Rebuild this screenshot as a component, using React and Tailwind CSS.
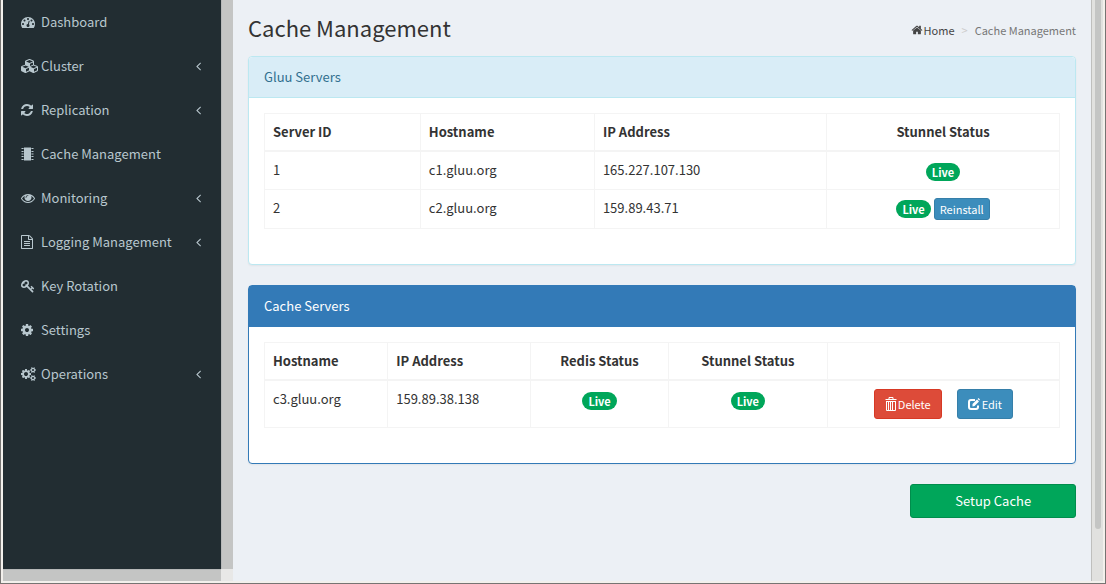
const PATHS = {
  dashboard: {
    box: "0 0 1792 1792",
    d: "M384 1152q0-53-37.5-90.5t-90.5-37.5-90.5 37.5-37.5 90.5 37.5 90.5 90.5 37.5 90.5-37.5 37.5-90.5zm192-448q0-53-37.5-90.5t-90.5-37.5-90.5 37.5-37.5 90.5 37.5 90.5 90.5 37.5 90.5-37.5 37.5-90.5zm428 481l101-382q6-26-7.5-48.5t-38.5-29.5-48 6.5-30 39.5l-101 382q-60 5-107 43.5t-63 98.5q-20 77 20 146t117 89 146-20 89-117q16-60-6-117t-72-91zm660-33q0-53-37.5-90.5t-90.5-37.5-90.5 37.5-37.5 90.5 37.5 90.5 90.5 37.5 90.5-37.5 37.5-90.5zm-640-640q0-53-37.5-90.5t-90.5-37.5-90.5 37.5-37.5 90.5 37.5 90.5 90.5 37.5 90.5-37.5 37.5-90.5zm448 192q0-53-37.5-90.5t-90.5-37.5-90.5 37.5-37.5 90.5 37.5 90.5 90.5 37.5 90.5-37.5 37.5-90.5zm320 448q0 261-141 483-19 29-54 29h-1402q-35 0-54-29-141-221-141-483 0-182 71-348t191-286 286-191 348-71 348 71 286 191 191 286 71 348z",
  },
  cubes: {
    box: "0 0 2304 1792",
    d: "M640 1632l384-192v-314l-384 164v342zm-64-454l404-173-404-173-404 173zm1088 454l384-192v-314l-384 164v342zm-64-454l404-173-404-173-404 173zm-448-293l384-165v-266l-384 164v267zm-64-379l441-189-441-189-441 189zm1088 518v416q0 36-19 67t-52 47l-448 224q-25 14-57 14t-57-14l-448-224q-5-2-7-4-2 2-7 4l-448 224q-25 14-57 14t-57-14l-448-224q-33-16-52-47t-19-67v-416q0-38 21.5-70t56.5-48l434-186v-400q0-38 21.5-70t56.5-48l448-192q23-10 50-10t50 10l448 192q35 16 56.5 48t21.5 70v400l434 186q36 16 57 48t21 70z",
  },
  refresh: {
    box: "128 0 1536 1792",
    d: "M1639 1056q0 5-1 7-64 268-268 434.5t-478 166.5q-146 0-282.5-55t-243.5-157l-129 129q-19 19-45 19t-45-19-19-45v-448q0-26 19-45t45-19h448q26 0 45 19t19 45-19 45l-137 137q71 66 161 102t187 36q134 0 250-65t186-179q11-17 53-117 8-23 30-23h192q13 0 22.5 9.5t9.5 22.5zm25-800v448q0 26-19 45t-45 19h-448q-26 0-45-19t-19-45 19-45l138-138q-148-137-349-137-134 0-250 65t-186 179q-11 17-53 117-8 23-30 23h-199q-13 0-22.5-9.5t-9.5-22.5v-7q65-268 270-434.5t480-166.5q146 0 284 55.5t245 156.5l130-129q19-19 45-19t45 19 19 45z",
  },
  chip: {
    box: "0 0 13 14",
    d: "M3 0.500h7v13H3zM1 1h1.600v1H1zM0 1.200h1v.6H0zM1 4h1.600v1H1zM0 4.200h1v.6H0zM1 6.500h1.600v1H1zM0 6.700h1v.6H0zM1 9h1.600v1H1zM0 9.200h1v.6H0zM1 12h1.600v1H1zM0 12.200h1v.6H0zM10.400 1h1.600v1h-1.600zM12 1.200h1v.6h-1zM10.400 4h1.600v1h-1.600zM12 4.200h1v.6h-1zM10.400 6.500h1.600v1h-1.600zM12 6.700h1v.6h-1zM10.400 9h1.600v1h-1.600zM12 9.200h1v.6h-1zM10.400 12h1.600v1h-1.600zM12 12.200h1v.6h-1z",
  },
  eye: {
    box: "0 0 1792 1792",
    d: "M1664 960q-152-236-381-353 61 104 61 225 0 185-131.5 316.5t-316.5 131.5-316.5-131.5-131.5-316.5q0-121 61-225-229 117-381 353 133 205 333.5 326.5t434.5 121.5 434.5-121.5 333.5-326.5zm-720-384q0-20-14-34t-34-14q-125 0-214.5 89.5t-89.5 214.5q0 20 14 34t34 14 34-14 14-34q0-86 61-147t147-61q20 0 34-14t14-34zm848 384q0 34-20 69-140 230-376.5 368.5t-499.5 138.5-499.5-139-376.5-368q-20-35-20-69t20-69q140-229 376.5-368t499.5-139 499.5 139 376.5 368q20 35 20 69z",
  },
  file: {
    box: "128 0 1536 1792",
    d: "M1596 380q28 28 48 76t20 88v1152q0 40-28 68t-68 28h-1344q-40 0-68-28t-28-68v-1600q0-40 28-68t68-28h896q40 0 88 20t76 48zm-444-244v376h376q-10-29-22-41l-313-313q-12-12-41-22zm384 1528v-1024h-416q-40 0-68-28t-28-68v-416h-768v1536h1280zm-1024-864q0-14 9-23t23-9h704q14 0 23 9t9 23v64q0 14-9 23t-23 9h-704q-14 0-23-9t-9-23v-64zm736 224q14 0 23 9t9 23v64q0 14-9 23t-23 9h-704q-14 0-23-9t-9-23v-64q0-14 9-23t23-9h704zm0 256q14 0 23 9t9 23v64q0 14-9 23t-23 9h-704q-14 0-23-9t-9-23v-64q0-14 9-23t23-9h704z",
  },
  key: {
    box: "0 0 1792 1792",
    d: "M832 512q0-80-56-136t-136-56-136 56-56 136q0 42 19 83-41-19-83-19-80 0-136 56t-56 136 56 136 136 56 136-56 56-136q0-42-19-83 41 19 83 19 80 0 136-56t56-136zm851 704q0 17-49 66t-66 49q-9 0-28.5-16t-36.5-33-38.5-40-24.5-26l-96 96 220 220q28 28 28 68 0 42-39 81t-81 39q-40 0-68-28l-671-671q-176 131-365 131-163 0-265.5-102.5t-102.5-265.5q0-160 95-313t248-248 313-95q163 0 265.5 102.5t102.5 265.5q0 189-131 365l355 355 96-96q-3-3-26-24.5t-40-38.5-33-36.5-16-28.5q0-17 49-66t66-49q13 0 23 10 6 6 46 44.5t82 79.5 86.5 86 73 78 28.5 41z",
  },
  cog: {
    box: "128 0 1536 1792",
    d: "M1152 896q0-106-75-181t-181-75-181 75-75 181 75 181 181 75 181-75 75-181zm512-109v222q0 12-8 23t-20 13l-185 28q-19 54-39 91 35 50 107 138 10 12 10 25t-9 23q-27 37-99 108t-94 71q-12 0-26-9l-138-108q-44 23-91 38-16 136-29 186-7 28-36 28h-222q-14 0-24.5-8.5t-11.5-21.5l-28-184q-49-16-90-37l-141 107q-10 9-25 9-14 0-25-11-126-114-165-168-7-10-7-23 0-12 8-23 15-21 51-66.5t54-70.5q-27-50-41-99l-183-27q-13-2-21-12.5t-8-23.5v-222q0-12 8-23t19-13l186-28q14-46 39-92-40-57-107-138-10-12-10-24 0-10 9-23 26-36 98.5-107.5t94.5-71.5q13 0 26 10l138 107q44-23 91-38 16-136 29-186 7-28 36-28h222q14 0 24.5 8.5t11.5 21.5l28 184q49 16 90 37l142-107q9-9 24-9 13 0 25 10 129 119 165 170 7 8 7 22 0 12-8 23-15 21-51 66.5t-54 70.5q26 50 41 98l183 28q13 2 21 12.5t8 23.5z",
  },
  cogs: {
    box: "-64 0 1920 1792",
    d: "M832 896q0-106-75-181t-181-75-181 75-75 181 75 181 181 75 181-75 75-181zm768 512q0-52-38-90t-90-38-90 38-38 90q0 53 37.5 90.5t90.5 37.5 90.5-37.5 37.5-90.5zm0-1024q0-52-38-90t-90-38-90 38-38 90q0 53 37.5 90.5t90.5 37.5 90.5-37.5 37.5-90.5zm-384 421v185q0 10-7 19.5t-16 10.5l-155 24q-11 35-32 76 34 48 90 115 7 11 7 20 0 12-7 19-23 30-82.5 89.5t-78.5 59.5q-11 0-21-7l-115-90q-37 19-77 31-11 108-23 155-7 24-30 24h-186q-11 0-20-7.5t-10-17.5l-23-153q-34-10-75-31l-118 89q-7 7-20 7-11 0-21-8-144-133-144-160 0-9 7-19 10-14 41-53t47-61q-23-44-35-82l-152-24q-10-1-17-9.5t-7-19.5v-185q0-10 7-19.5t16-10.5l155-24q11-35 32-76-34-48-90-115-7-11-7-20 0-12 7-20 22-30 82-89t79-59q11 0 21 7l115 90q34-18 77-32 11-108 23-154 7-24 30-24h186q11 0 20 7.5t10 17.5l23 153q34 10 75 31l118-89q8-7 20-7 11 0 21 8 144 133 144 160 0 8-7 19-12 16-42 54t-45 60q23 48 34 82l152 23q10 2 17 10.5t7 19.5zm640 533v140q0 16-149 31-12 27-30 52 51 113 51 138 0 4-4 7-122 71-124 71-8 0-46-47t-52-68q-20 2-30 2t-30-2q-14 21-52 68t-46 47q-2 0-124-71-4-3-4-7 0-25 51-138-18-25-30-52-149-15-149-31v-140q0-16 149-31 13-29 30-52-51-113-51-138 0-4 4-7 4-2 35-20t59-34 30-16q8 0 46 46.5t52 67.5q20-2 30-2t30 2q51-71 92-112l6-2q4 0 124 70 4 3 4 7 0 25-51 138 17 23 30 52 149 15 149 31zm0-1024v140q0 16-149 31-12 27-30 52 51 113 51 138 0 4-4 7-122 71-124 71-8 0-46-47t-52-68q-20 2-30 2t-30-2q-14 21-52 68t-46 47q-2 0-124-71-4-3-4-7 0-25 51-138-18-25-30-52-149-15-149-31v-140q0-16 149-31 13-29 30-52-51-113-51-138 0-4 4-7 4-2 35-20t59-34 30-16q8 0 46 46.5t52 67.5q20-2 30-2t30 2q51-71 92-112l6-2q4 0 124 70 4 3 4 7 0 25-51 138 17 23 30 52 149 15 149 31z",
  },
  home: {
    box: "64 0 1664 1792",
    d: "M1472 992v480q0 26-19 45t-45 19h-384v-384h-256v384h-384q-26 0-45-19t-19-45v-480q0-1 .5-3t.5-3l575-474 575 474q1 2 1 6zm223-69l-62 74q-8 9-21 11h-3q-13 0-21-7l-692-577-692 577q-12 8-24 7-13-2-21-11l-62-74q-8-10-7-23.5t11-21.5l719-599q32-26 76-26t76 26l244 204v-195q0-14 9-23t23-9h192q14 0 23 9t9 23v408l219 182q10 8 11 21.5t-7 23.5z",
  },
  angleLeft: {
    box: "576 0 640 1792",
    d: "M1203 544q0 13-10 23l-393 393 393 393q10 10 10 23t-10 23l-50 50q-10 10-23 10t-23-10l-466-466q-10-10-10-23t10-23l466-466q10-10 23-10t23 10l50 50q10 10 10 23z",
  },
};

function Icon({ name, className }) {
  return (
    <svg viewBox={PATHS[name].box} fill="currentColor" aria-hidden="true" className={className}>
      <path d={PATHS[name].d} />
    </svg>
  );
}

function TrashIcon() {
  return (
    <svg viewBox="0 0 12 14" fill="none" stroke="currentColor" aria-hidden="true" className="h-[14px] w-3">
      <path d="M4 2.5v-2h4v2M0.5 2.5h11M1.5 4v9.500h9V4M3.5 4.5v9M5.5 4.5v9M7.5 4.5v9M1 4.500h10" />
    </svg>
  );
}

function EditIcon() {
  return (
    <svg viewBox="0 0 12 12" fill="none" stroke="currentColor" aria-hidden="true" className="h-3 w-3">
      <path strokeWidth="2" d="M7 2H3Q1 2 1 4v5q0 2 2 2h5q2 0 2-2V7.500" />
      <path fill="currentColor" stroke="none" d="M4.500 8.500V6L9 1.500l2 2L6.500 8zM9.600 0.900l.9-.9L12 1.600l-.7.900z" />
    </svg>
  );
}

const MENU = [
  { label: "Dashboard", icon: "dashboard", size: "w-[14px]" },
  { label: "Cluster", icon: "cubes", size: "w-[18px]", open: true },
  { label: "Replication", icon: "refresh", size: "w-3", open: true },
  { label: "Cache Management", icon: "chip", size: "w-[13px]" },
  { label: "Monitoring", icon: "eye", size: "w-[14px]", open: true },
  { label: "Logging Management", icon: "file", size: "w-3", open: true },
  { label: "Key Rotation", icon: "key", size: "w-[14px]" },
  { label: "Settings", icon: "cog", size: "w-3" },
  { label: "Operations", icon: "cogs", size: "w-[15px]", open: true },
];

function Sidebar() {
  return (
    <aside className="grid w-[230px] shrink-0 grid-cols-[1fr_12px] grid-rows-[1fr_12px]">
      <nav className="bg-[#222d32] text-[#b8c7ce]">
        <ul>
          {MENU.map((item) => (
            <li key={item.label}>
              <a href="#" className="flex h-11 items-center pr-5 pl-[18px]">
                <span className="w-5 shrink-0">
                  <Icon name={item.icon} className={`h-[14px] max-w-none ${item.size}`} />
                </span>
                <span className="grow whitespace-nowrap">{item.label}</span>
                {item.open && <Icon name="angleLeft" className="h-[14px] w-[5px]" />}
              </a>
            </li>
          ))}
        </ul>
      </nav>
      <div className="border-l border-[#b6b8b8] bg-[#c4c5c4]" />
      <div className="border-t border-[#b6b8b8] bg-[#c4c5c4]" />
      <div className="bg-[#e8e8e7]" />
    </aside>
  );
}

function Live() {
  return (
    <span className="inline-block rounded-full bg-[#00a65a] px-[6px] text-[11px] leading-[18px] font-bold text-white">
      Live
    </span>
  );
}

const TH = "h-[37px] border border-b-2 border-[#f4f4f4] px-2 text-left font-bold";
const THC = "h-[37px] border border-b-2 border-[#f4f4f4] px-2 text-center font-bold";
const TD = "border border-[#f4f4f4] p-2 align-top";
const TDC = "border border-[#f4f4f4] p-2 text-center align-top";

function GluuServers() {
  return (
    <section className="rounded border border-[#bce8f1] bg-white shadow-xs">
      <h2 className="rounded-t border-b border-[#bce8f1] bg-[#d9edf7] px-[15px] py-[10px] text-[#31708f]">
        Gluu Servers
      </h2>
      <div className="px-[15px] pt-[15px] pb-[35px]">
        <table className="w-full table-fixed border-collapse">
          <colgroup>
            <col className="w-[19.6%]" />
            <col className="w-[21.9%]" />
            <col className="w-[29.2%]" />
            <col />
          </colgroup>
          <thead>
            <tr>
              <th className={TH}>Server ID</th>
              <th className={TH}>Hostname</th>
              <th className={TH}>IP Address</th>
              <th className={THC}>Stunnel Status</th>
            </tr>
          </thead>
          <tbody>
            <tr className="h-[39px]">
              <td className={TD}>1</td>
              <td className={TD}>c1.gluu.org</td>
              <td className={TD}>165.227.107.130</td>
              <td className={TDC}>
                <div className="flex h-5 items-center justify-center pt-1">
                  <Live />
                </div>
              </td>
            </tr>
            <tr className="h-[39px]">
              <td className={TD}>2</td>
              <td className={TD}>c2.gluu.org</td>
              <td className={TD}>159.89.43.71</td>
              <td className={TDC}>
                <div className="flex h-[22px] items-center justify-center gap-[3px]">
                  <Live />
                  <button className="h-[22px] rounded-[3px] border border-[#367fa9] bg-[#3c8dbc] px-[5px] text-[11px] leading-5 text-white">
                    Reinstall
                  </button>
                </div>
              </td>
            </tr>
          </tbody>
        </table>
      </div>
    </section>
  );
}

function CacheServers() {
  return (
    <section className="rounded border border-[#337ab7] bg-white shadow-xs">
      <h2 className="border-b border-[#337ab7] bg-[#337ab7] px-[15px] py-[10px] text-white">Cache Servers</h2>
      <div className="px-[15px] pt-[15px] pb-[35px]">
        <table className="w-full table-fixed border-collapse">
          <colgroup>
            <col className="w-[15.5%]" />
            <col className="w-[18%]" />
            <col className="w-[17.3%]" />
            <col className="w-[20%]" />
            <col />
          </colgroup>
          <thead>
            <tr>
              <th className={TH}>Hostname</th>
              <th className={TH}>IP Address</th>
              <th className={THC}>Redis Status</th>
              <th className={THC}>Stunnel Status</th>
              <td className={TH} />
            </tr>
          </thead>
          <tbody>
            <tr>
              <td className={TD}>c3.gluu.org</td>
              <td className={TD}>159.89.38.138</td>
              <td className={TDC}>
                <div className="flex h-5 items-center justify-center pt-1">
                  <Live />
                </div>
              </td>
              <td className={TDC}>
                <div className="flex h-5 items-center justify-center pt-1">
                  <Live />
                </div>
              </td>
              <td className={TDC}>
                <div className="flex justify-center gap-[15px]">
                  <button className="flex h-[30px] items-center gap-px rounded-[3px] border border-[#d73925] bg-[#dd4b39] px-[10px] text-[11px] text-white">
                    <TrashIcon />
                    Delete
                  </button>
                  <button className="flex h-[30px] items-center gap-[2px] rounded-[3px] border border-[#367fa9] bg-[#3c8dbc] px-[10px] text-[11px] text-white">
                    <EditIcon />
                    Edit
                  </button>
                </div>
              </td>
            </tr>
          </tbody>
        </table>
      </div>
    </section>
  );
}

export default function App() {
  return (
    <div className="flex min-h-screen border-r border-b border-l border-[#767472] bg-[#f3f0ec] pr-[2px] pb-[2px] pl-[2px] font-['Noto_Sans_CJK_SC','Open_Sans',sans-serif] text-[13px] leading-5 text-[#333]">
      <Sidebar />
      <main className="min-w-0 grow bg-[#ecf0f5] px-[15px]">
        <header className="flex h-14 items-center justify-between pb-[2px]">
          <h1 className="text-[22px] leading-[26px]">Cache Management</h1>
          <nav aria-label="Breadcrumb" className="flex items-center pt-[6px] text-[11px] text-[#777]">
            <a href="#" className="flex items-center gap-px text-[#444]">
              <Icon name="home" className="h-3 w-3" />
              Home
            </a>
            <span className="px-[7px] text-[#ccc]">&gt;</span>
            <span>Cache Management</span>
          </nav>
        </header>
        <div className="flex flex-col gap-5">
          <GluuServers />
          <CacheServers />
          <button className="h-[34px] w-1/5 self-end rounded-[3px] border border-[#008d4c] bg-[#00a65a] text-white">
            Setup Cache
          </button>
        </div>
      </main>
      <div className="flex w-3 shrink-0 justify-center border-l border-[#bfbfbd] bg-[#e1e1df]">
        <div className="h-[91%] w-[6px] rounded-b-full bg-[#c4c5c4]" />
      </div>
    </div>
  );
}
